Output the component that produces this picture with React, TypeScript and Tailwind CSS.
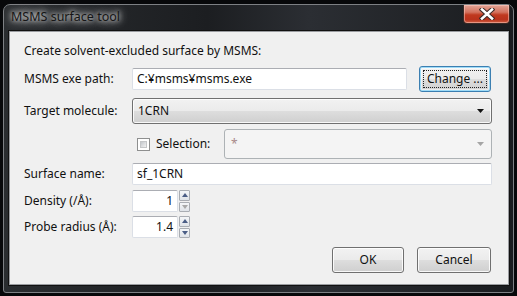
import React from 'react'

const FONT = "font-['Noto_Sans','Liberation_Sans',sans-serif]"

function TextBox({ value, className = '', right = false }: { value: string; className?: string; right?: boolean }) {
  return (
    <div className={`h-[22px] bg-white border border-[#dbdfe6] border-t-[#abadb3] rounded-[2px] flex items-center px-[4px] ${right ? 'justify-end' : ''} ${className}`}>
      <span className="text-[12px] text-[#111] leading-none">{value}</span>
    </div>
  )
}

function Btn({ children, className = '', focused = false }: { children: React.ReactNode; className?: string; focused?: boolean }) {
  return (
    <div className={`relative h-[26px] rounded-[3px] border flex items-center justify-center text-[12px] text-[#111] bg-[linear-gradient(#f2f2f2_0%,#ebebeb_48%,#dddddd_52%,#cfcfcf_100%)] ${focused ? 'border-[#3c7fb1] shadow-[inset_0_0_0_1px_#9fdcf8,inset_0_0_0_2px_rgba(255,255,255,0.6)]' : 'border-[#707070] shadow-[inset_0_0_0_1px_rgba(255,255,255,0.85)]'} ${className}`}>
      {focused && <div className="absolute inset-[3px] border border-dotted border-[#222]" />}
      <span className="relative leading-none">{children}</span>
    </div>
  )
}

function Tri({ color, up = false }: { color: string; up?: boolean }) {
  return (
    <svg width="7" height="4" viewBox="0 0 7 4">
      <path d={up ? 'M0 4 L3.5 0 L7 4 Z' : 'M0 0 L7 0 L3.5 4 Z'} fill={color} />
    </svg>
  )
}

function Spin({ value, downDisabled = false }: { value: string; downDisabled?: boolean }) {
  return (
    <div className="flex items-stretch h-[22px]">
      <TextBox value={value} right className="w-[46px]" />
      <div className="flex flex-col gap-[1px] w-[11px] ml-[1px]">
        <div className="flex-1 border border-[#a9adb3] rounded-[1px] bg-[linear-gradient(#f4f6f8,#dfe3e8)] flex items-center justify-center">
          <svg width="6" height="4" viewBox="0 0 6 4"><path d="M0 4 L3 0 L6 4 Z" fill="#4a5d85" /></svg>
        </div>
        <div className="flex-1 border border-[#a9adb3] rounded-[1px] bg-[linear-gradient(#f4f6f8,#dfe3e8)] flex items-center justify-center">
          <svg width="6" height="4" viewBox="0 0 6 4"><path d="M0 0 L6 0 L3 4 Z" fill={downDisabled ? '#a8a8a8' : '#4a5d85'} /></svg>
        </div>
      </div>
    </div>
  )
}

function Label({ children }: { children: React.ReactNode }) {
  return <div className="w-[108px] shrink-0 text-[12px] text-[#111] leading-none">{children}</div>
}

export default function App() {
  return (
    <div className={`w-[517px] h-[296px] bg-[#07080a] overflow-hidden pt-[4px] pl-[3px] ${FONT}`}>
      {/* window frame */}
      <div className="w-[511px] h-[289px] rounded-t-[7px] rounded-b-[3px] border border-[#7d8084] bg-[linear-gradient(90deg,#2a2d30_0%,#1c1e21_40%,#2b2e33_60%,#1a1c1f_100%)] flex flex-col">
        {/* title bar */}
        <div className="h-[26px] flex items-start justify-between">
          <div className="pl-[7px] pt-[6px] text-[12.5px] text-[#151515] leading-none [text-shadow:0_0_8px_rgba(255,255,255,0.95),0_0_4px_rgba(255,255,255,0.8),0_0_14px_rgba(255,255,255,0.6)]">
            MSMS surface tool
          </div>
          <div className="mr-[3px] w-[47px] h-[19px] rounded-b-[4px] border border-t-0 border-[#3a2a26] bg-[linear-gradient(#e3a496_0%,#d3725e_40%,#c0391f_55%,#b9321c_80%,#cf5e42_100%)] shadow-[inset_0_0_0_1px_rgba(255,210,200,0.5)] flex items-center justify-center">
            <svg width="16" height="12" viewBox="0 0 16 12">
              <path d="M3 1.5 L13 10.5 M13 1.5 L3 10.5" stroke="#3b2a28" strokeWidth="4.6" strokeLinecap="square" />
              <path d="M3 1.5 L13 10.5 M13 1.5 L3 10.5" stroke="#ffffff" strokeWidth="2.6" strokeLinecap="square" />
            </svg>
          </div>
        </div>
        {/* client area */}
        <div className="ml-[5px] mr-[4px] h-[254px] bg-[#f0f0f0] border border-[#9a9ca0] shadow-[0_0_0_1px_#111] pl-[14px] pr-[16px] pt-[10px] flex flex-col">
          <div className="h-[18px] flex items-center text-[12px] text-[#111] leading-none">Create solvent-excluded surface by MSMS:</div>

          <div className="mt-[6px] h-[25px] flex items-center">
            <Label>MSMS exe path:</Label>
            <TextBox value="C:¥msms¥msms.exe" className="w-[275px]" />
            <Btn focused className="ml-[12px] w-[72px] h-[25px]">Change ...</Btn>
          </div>

          <div className="mt-[7px] h-[26px] flex items-center">
            <Label>Target molecule:</Label>
            <div className="w-[361px] h-[26px] rounded-[3px] border border-[#707070] bg-[linear-gradient(#f2f2f2_0%,#ebebeb_48%,#dddddd_52%,#cfcfcf_100%)] shadow-[inset_0_0_0_1px_rgba(255,255,255,0.85)] flex items-center justify-between pl-[5px] pr-[7px]">
              <span className="text-[12px] text-[#111] leading-none">1CRN</span>
              <Tri color="#111" />
            </div>
          </div>

          <div className="mt-[5px] h-[30px] flex items-center">
            <div className="w-[108px] shrink-0" />
            <div className="ml-[5px] w-[13px] h-[13px] border border-[#8e8f8f] bg-white p-[2px]">
              <div className="w-full h-full bg-[linear-gradient(135deg,#c3c7cc,#f2f2f2)] border border-[#c4c6c8]" />
            </div>
            <span className="ml-[6px] text-[12px] text-[#111] leading-none">Selection:</span>
            <div className="ml-auto w-[268px] h-[30px] rounded-[3px] border border-[#adb2b5] bg-[#f4f4f4] flex items-center justify-between pl-[6px] pr-[7px]">
              <span className="text-[12px] text-[#a88a8a] leading-none">*</span>
              <Tri color="#a5a5a5" />
            </div>
          </div>

          <div className="mt-[4px] h-[22px] flex items-center">
            <Label>Surface name:</Label>
            <TextBox value="sf_1CRN" className="w-[361px]" />
          </div>

          <div className="mt-[5px] h-[22px] flex items-center">
            <Label>Density (/Å):</Label>
            <Spin value="1" downDisabled />
          </div>

          <div className="mt-[4px] h-[22px] flex items-center">
            <Label>Probe radius (Å):</Label>
            <Spin value="1.4" />
          </div>

          <div className="mt-[9px] flex justify-end gap-[13px] pr-[1px]">
            <Btn className="w-[72px]">OK</Btn>
            <Btn className="w-[74px]">Cancel</Btn>
          </div>
        </div>
      </div>
    </div>
  )
}
